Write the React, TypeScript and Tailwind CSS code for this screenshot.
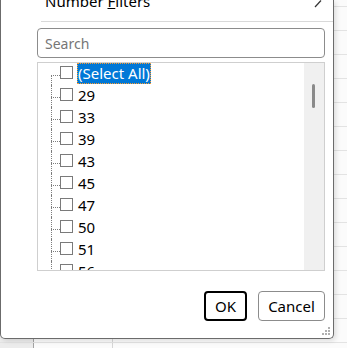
import React from 'react';

const values = ['29', '33', '39', '43', '45', '47', '50', '51', '56'];

const Row: React.FC<{ label: string; first?: boolean; selected?: boolean }> = ({ label, first, selected }) => (
  <div className="flex h-[22px] shrink-0 items-start">
    <div className="w-[13px] shrink-0" />
    {/* tree connector */}
    <div className="flex h-[22px] w-[9px] shrink-0 flex-col">
      <div className={first ? 'h-[12px]' : 'h-[12px] border-l border-dotted border-[#7d7d7d]'} />
      <div className="flex-1 border-l border-t border-dotted border-[#7d7d7d]" />
    </div>
    <div className="mt-[3px] h-[13px] w-[13px] shrink-0 border border-[#7a7a7a] bg-white" />
    <div
      className={
        selected
          ? 'ml-[4px] h-[21px] bg-[#0078d7] px-[1px] text-[15px] leading-[21px] text-white outline outline-1 -outline-offset-1 outline-dotted outline-[#ff9d2e]'
          : 'ml-[4px] h-[21px] px-[1px] text-[15px] leading-[21px] text-black'
      }
    >
      {label}
    </div>
  </div>
);

export default function App() {
  return (
    <div className="relative h-[348px] w-[347px] overflow-hidden bg-[#fbfbfb] font-['Noto_Sans','Open_Sans',sans-serif]">
      {/* sheet behind the dropdown */}
      <div className="flex flex-col">
        <div className="h-[7px] border-b border-[#e3e3e3]" />
        {Array.from({ length: 15 }).map((_, i) => (
          <div key={i} className="flex h-[24px] border-b border-[#e3e3e3]">
            <div className="w-[34px] border-r border-[#a3a3a3] bg-[#ececec]" />
            <div className="w-[79px] border-r border-[#d6d6d6]" />
            <div className="flex-1" />
          </div>
        ))}
      </div>

      {/* filter dropdown */}
      <div className="absolute left-0 top-0 flex h-[339px] w-[334px] flex-col rounded-b-[5px] border-x border-b border-[#6b6b6b] bg-white shadow-[2px_2px_5px_rgba(0,0,0,0.12)]">
        <div className="relative h-[21px] shrink-0">
          <div className="-mt-[9px] pl-[44px] text-[15px] leading-[20px] text-black">
            Number <u>F</u>ilters
          </div>
          <svg className="absolute left-[313px] top-0" width="8" height="8" viewBox="0 0 8 8">
            <path d="M1 7 L7 0.5" stroke="#333" strokeWidth="1.2" fill="none" />
          </svg>
        </div>
        <div className="ml-[40px] h-px shrink-0 bg-[#d9d9d9]" />

        <div className="ml-[36px] mt-[6px] flex h-[30px] w-[288px] shrink-0 items-center rounded-[4px] border border-[#8c8c8c] px-[7px] text-[14px] text-[#767676]">
          Search
        </div>

        <div className="ml-[36px] mt-[4px] flex h-[209px] w-[288px] shrink-0 border border-[#cfcfcf]">
          <div className="flex flex-1 flex-col overflow-hidden">
            <Row label="(Select All)" first selected />
            {values.map((v) => (
              <Row key={v} label={v} />
            ))}
          </div>
          <div className="w-[20px] shrink-0 bg-[#f0f0f0] pl-[8px] pt-[21px]">
            <div className="h-[24px] w-[3px] rounded-full bg-[#8a8a8a]" />
          </div>
        </div>

        <div className="mt-[20px] flex justify-end gap-[11px] pr-[8px]">
          <button className="flex h-[30px] w-[43px] items-center justify-center rounded-[4px] border-2 border-black bg-white text-[15px] text-black">
            OK
          </button>
          <button className="flex h-[30px] w-[67px] items-center justify-center rounded-[4px] border border-[#8c8c8c] bg-white text-[15px] text-black">
            Cancel
          </button>
        </div>

        <div className="mt-auto flex justify-end pb-[2px] pr-[2px]">
          <svg width="9" height="9" viewBox="0 0 9 9">
            <rect x="6" y="0" width="2" height="2" fill="#b0b0b0" />
            <rect x="3" y="3" width="2" height="2" fill="#b0b0b0" />
            <rect x="6" y="3" width="2" height="2" fill="#b0b0b0" />
            <rect x="0" y="6" width="2" height="2" fill="#b0b0b0" />
            <rect x="3" y="6" width="2" height="2" fill="#b0b0b0" />
            <rect x="6" y="6" width="2" height="2" fill="#b0b0b0" />
          </svg>
        </div>
      </div>
    </div>
  );
}
